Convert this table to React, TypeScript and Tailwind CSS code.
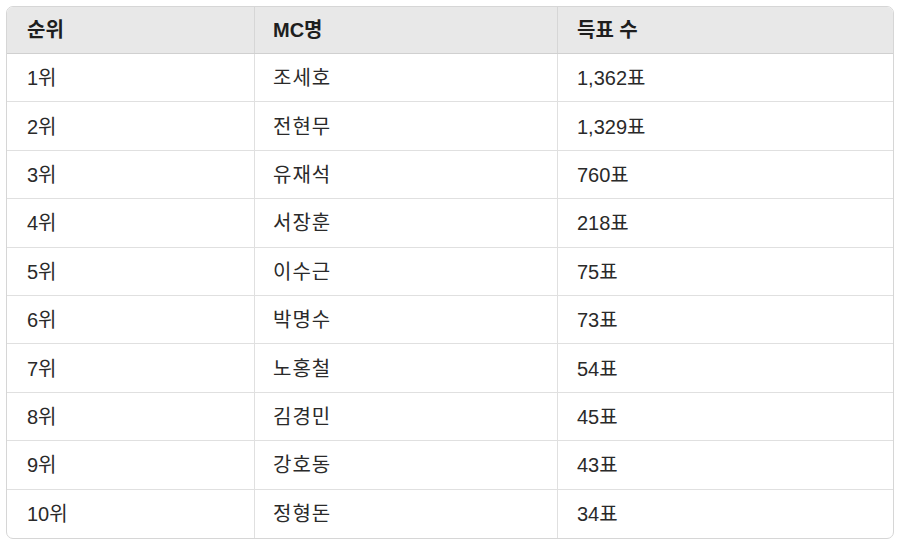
import React from "react";

const rows: [string, string, string][] = [
  ["1위", "조세호", "1,362표"],
  ["2위", "전현무", "1,329표"],
  ["3위", "유재석", "760표"],
  ["4위", "서장훈", "218표"],
  ["5위", "이수근", "75표"],
  ["6위", "박명수", "73표"],
  ["7위", "노홍철", "54표"],
  ["8위", "김경민", "45표"],
  ["9위", "강호동", "43표"],
  ["10위", "정형돈", "34표"],
];

export default function App() {
  return (
    <div
      className="w-[900px] h-[544px] bg-white p-[6px] text-[#2a2a2a] text-[20px]"
      style={{ fontFamily: '"Liberation Sans", "Noto Sans CJK KR", sans-serif' }}
    >
      <div className="w-[888px] border border-[#d6d6d6] rounded-[7px] overflow-hidden">
        <div className="grid grid-cols-[248px_303px_1fr] h-[47px] bg-[#e8e8e8] border-b border-[#d0d0d0] font-bold text-[#1e1e1e]">
          <div className="flex items-center pl-[20px] border-r border-[#d6d6d6]">순위</div>
          <div className="flex items-center pl-[18px] border-r border-[#d6d6d6]">MC명</div>
          <div className="flex items-center pl-[19px]">득표 수</div>
        </div>
        {rows.map((r, i) => (
          <div
            key={i}
            className={`grid grid-cols-[248px_303px_1fr] h-[48.4px] ${i < rows.length - 1 ? "border-b border-[#e0e0e0]" : ""}`}
          >
            <div className="flex items-center pl-[20px] pt-[1px] border-r border-[#e0e0e0]">{r[0]}</div>
            <div className="flex items-center pl-[18px] pt-[1px] border-r border-[#e0e0e0] tracking-[1px]">{r[1]}</div>
            <div className="flex items-center pl-[19px] pt-[1px]">{r[2]}</div>
          </div>
        ))}
      </div>
    </div>
  );
}
